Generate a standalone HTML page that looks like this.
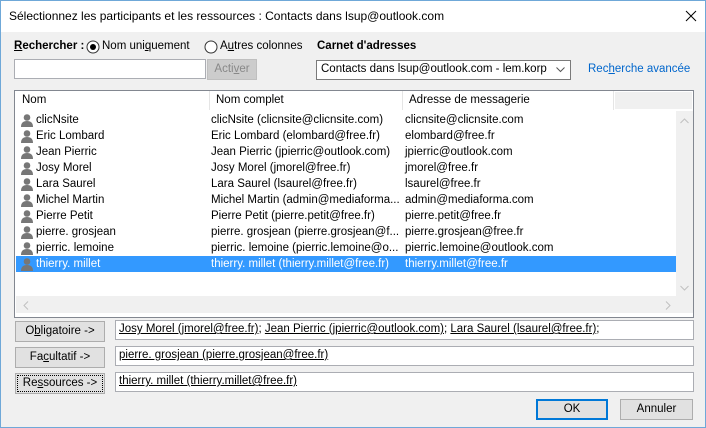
<!DOCTYPE html>
<html><head><meta charset="utf-8"><style>
*{box-sizing:border-box;margin:0;padding:0}
body{width:706px;height:428px;overflow:hidden;font-family:"Liberation Sans",sans-serif;font-size:11.5px;color:#000;background:#f0f0f0;position:relative}
.win{position:absolute;left:0;top:0;width:706px;height:428px;border:1px solid #6fa8d8;background:#f0f0f0}
.a{position:absolute;white-space:nowrap}
.title{position:absolute;left:0;top:0;width:704px;height:31px;background:#fff}
.btn{position:absolute;background:#e1e1e1;border:1px solid #adadad;text-align:center;line-height:18px}
.inp{position:absolute;background:#fff;border:1px solid #abadb3}
.hdr{position:absolute;left:13px;top:89px;width:680px;height:21px;background:#fff;border:1px solid #828790}
.list{position:absolute;left:13px;top:109px;width:680px;height:208px;background:#fff;border:1px solid #828790;border-top:none}
.row{position:absolute;left:1px;width:660px;height:16px;line-height:16px}
.row span{position:absolute}
.sel{background:#3399ff;color:#fff}
u{text-decoration:underline}
.ico{position:absolute;left:5px;top:2px;width:12px;height:13px}
</style></head><body>
<div class="win">
<div class="title"></div>
<div class="a" style="left:8px;top:8px;font-size:12px">Sélectionnez les participants et les ressources : Contacts dans lsup@outlook.com</div>
<svg class="a" style="left:684px;top:9px" width="12" height="12"><path d="M1 1L11 11M11 1L1 11" stroke="#000" stroke-width="1"/></svg>

<div class="a" style="left:13px;top:39px;font-weight:bold"><u>R</u>echercher :</div>
<svg class="a" style="left:85px;top:39px" width="14" height="14"><circle cx="7" cy="7" r="6" fill="#fff" stroke="#333"/><circle cx="7" cy="7" r="3" fill="#000"/></svg>
<div class="a" style="left:101px;top:39px">Nom uni<u>q</u>uement</div>
<svg class="a" style="left:203px;top:39px" width="14" height="14"><circle cx="7" cy="7" r="6" fill="#fff" stroke="#333"/></svg>
<div class="a" style="left:219px;top:39px">A<u>u</u>tres colonnes</div>
<div class="a" style="left:316px;top:39px;font-weight:bold">Carnet d'adresses</div>

<div class="inp" style="left:13px;top:58px;width:192px;height:20px"></div>
<div class="btn" style="left:206px;top:58px;width:50px;height:21px;background:#ccc;border-color:#bfbfbf;color:#888">Acti<u>v</u>er</div>
<div class="inp" style="left:315px;top:59px;width:255px;height:20px;border-color:#7a7a7a;padding:2px 0 0 4px;white-space:nowrap">Contacts dans lsup@outlook.com - lem.korp</div>
<svg class="a" style="left:555px;top:66px" width="9" height="6"><path d="M0.5 0.5L4.5 4.5L8.5 0.5" stroke="#555" fill="none"/></svg>
<div class="a" style="left:587px;top:62px;color:#0066cc">Rec<u>h</u>erche avancée</div>

<div class="hdr">
<div class="a" style="left:7px;top:3px">Nom</div>
<div class="a" style="left:194px;top:0;width:1px;height:19px;background:#e5e5e5"></div>
<div class="a" style="left:201px;top:3px">Nom complet</div>
<div class="a" style="left:387px;top:0;width:1px;height:19px;background:#e5e5e5"></div>
<div class="a" style="left:394px;top:3px">Adresse de messagerie</div>
<div class="a" style="left:598px;top:0;width:1px;height:19px;background:#e5e5e5"></div>
<div class="a" style="left:600px;top:1px;width:77px;height:17px;background:#f0f0f0"></div>
</div>

<div class="list">
<div class="a" style="left:661px;top:1px;width:17px;height:185px;background:#f0f0f0"></div>
<svg class="a" style="left:665px;top:8px" width="9" height="6"><path d="M0.5 5L4.5 1L8.5 5" stroke="#c0c0c0" fill="none"/></svg>
<svg class="a" style="left:665px;top:175px" width="9" height="6"><path d="M0.5 1L4.5 5L8.5 1" stroke="#c0c0c0" fill="none"/></svg>
<div class="a" style="left:1px;top:186px;width:677px;height:17px;background:#f0f0f0"></div>
<svg class="a" style="left:8px;top:191px" width="6" height="9"><path d="M5 0.5L1 4.5L5 8.5" stroke="#c0c0c0" fill="none"/></svg>
<svg class="a" style="left:650px;top:191px" width="6" height="9"><path d="M1 0.5L5 4.5L1 8.5" stroke="#c0c0c0" fill="none"/></svg>
<div class="a" style="left:661px;top:186px;width:17px;height:17px;background:#f0f0f0"></div>
</div>

<div id="rows" class="a" style="left:14px;top:111px;width:661px;height:170px">
<div class="row" style="top:0"><svg class="ico"><circle cx="6" cy="3.5" r="3.3" fill="#777"/><path d="M0 13Q0 7 6 7Q12 7 12 13Z" fill="#777"/></svg><span style="left:20px">clicNsite</span><span style="left:195px">clicNsite (clicnsite@clicnsite.com)</span><span style="left:389px">clicnsite@clicnsite.com</span></div>
<div class="row" style="top:16px"><svg class="ico"><circle cx="6" cy="3.5" r="3.3" fill="#777"/><path d="M0 13Q0 7 6 7Q12 7 12 13Z" fill="#777"/></svg><span style="left:20px">Eric Lombard</span><span style="left:195px">Eric Lombard (elombard@free.fr)</span><span style="left:389px">elombard@free.fr</span></div>
<div class="row" style="top:32px"><svg class="ico"><circle cx="6" cy="3.5" r="3.3" fill="#777"/><path d="M0 13Q0 7 6 7Q12 7 12 13Z" fill="#777"/></svg><span style="left:20px">Jean Pierric</span><span style="left:195px">Jean Pierric (jpierric@outlook.com)</span><span style="left:389px">jpierric@outlook.com</span></div>
<div class="row" style="top:48px"><svg class="ico"><circle cx="6" cy="3.5" r="3.3" fill="#777"/><path d="M0 13Q0 7 6 7Q12 7 12 13Z" fill="#777"/></svg><span style="left:20px">Josy Morel</span><span style="left:195px">Josy Morel (jmorel@free.fr)</span><span style="left:389px">jmorel@free.fr</span></div>
<div class="row" style="top:64px"><svg class="ico"><circle cx="6" cy="3.5" r="3.3" fill="#777"/><path d="M0 13Q0 7 6 7Q12 7 12 13Z" fill="#777"/></svg><span style="left:20px">Lara Saurel</span><span style="left:195px">Lara Saurel (lsaurel@free.fr)</span><span style="left:389px">lsaurel@free.fr</span></div>
<div class="row" style="top:80px"><svg class="ico"><circle cx="6" cy="3.5" r="3.3" fill="#777"/><path d="M0 13Q0 7 6 7Q12 7 12 13Z" fill="#777"/></svg><span style="left:20px">Michel Martin</span><span style="left:195px">Michel Martin (admin@mediaforma...</span><span style="left:389px">admin@mediaforma.com</span></div>
<div class="row" style="top:96px"><svg class="ico"><circle cx="6" cy="3.5" r="3.3" fill="#777"/><path d="M0 13Q0 7 6 7Q12 7 12 13Z" fill="#777"/></svg><span style="left:20px">Pierre Petit</span><span style="left:195px">Pierre Petit (pierre.petit@free.fr)</span><span style="left:389px">pierre.petit@free.fr</span></div>
<div class="row" style="top:112px"><svg class="ico"><circle cx="6" cy="3.5" r="3.3" fill="#777"/><path d="M0 13Q0 7 6 7Q12 7 12 13Z" fill="#777"/></svg><span style="left:20px">pierre. grosjean</span><span style="left:195px">pierre. grosjean (pierre.grosjean@f...</span><span style="left:389px">pierre.grosjean@free.fr</span></div>
<div class="row" style="top:128px"><svg class="ico"><circle cx="6" cy="3.5" r="3.3" fill="#777"/><path d="M0 13Q0 7 6 7Q12 7 12 13Z" fill="#777"/></svg><span style="left:20px">pierric. lemoine</span><span style="left:195px">pierric. lemoine (pierric.lemoine@o...</span><span style="left:389px">pierric.lemoine@outlook.com</span></div>
<div class="row sel" style="top:144px"><svg class="ico"><circle cx="6" cy="3.5" r="3.3" fill="#777"/><path d="M0 13Q0 7 6 7Q12 7 12 13Z" fill="#777"/></svg><span style="left:20px">thierry. millet</span><span style="left:195px">thierry. millet (thierry.millet@free.fr)</span><span style="left:389px">thierry.millet@free.fr</span></div>
</div>

<div class="btn" style="left:14px;top:320px;width:90px;height:21px">O<u>b</u>ligatoire -&gt;</div>
<div class="btn" style="left:14px;top:346px;width:90px;height:21px">Fa<u>c</u>ultatif -&gt;</div>
<div class="btn" style="left:14px;top:372px;width:90px;height:21px;outline:1px dotted #000;outline-offset:-3px">Re<u>s</u>sources -&gt;</div>
<div class="inp" style="left:114px;top:319px;width:579px;height:20px;padding:2px 0 0 3px;white-space:nowrap"><u>Josy Morel (jmorel@free.fr)</u>; <u>Jean Pierric (jpierric@outlook.com)</u>; <u>Lara Saurel (lsaurel@free.fr)</u>;</div>
<div class="inp" style="left:114px;top:345px;width:579px;height:20px;padding:2px 0 0 3px"><u>pierre. grosjean (pierre.grosjean@free.fr)</u></div>
<div class="inp" style="left:114px;top:371px;width:579px;height:20px;padding:2px 0 0 3px"><u>thierry. millet (thierry.millet@free.fr)</u></div>

<div class="btn" style="left:535px;top:398px;width:72px;height:21px;border:2px solid #0078d7;line-height:17px">OK</div>
<div class="btn" style="left:619px;top:398px;width:73px;height:21px">Annuler</div>
</div>
</body></html>
